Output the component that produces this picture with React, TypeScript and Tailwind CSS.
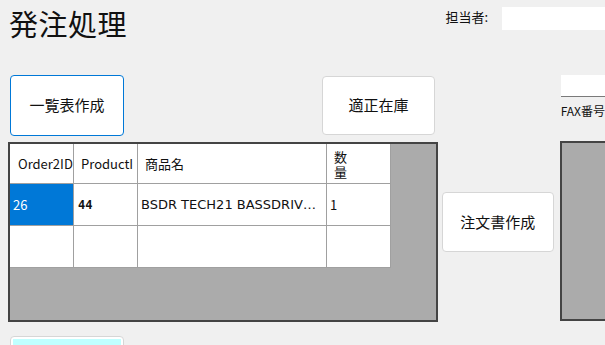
import React from "react";

const jp = '"Noto Sans CJK JP", "Noto Sans", sans-serif';

const rows = [
  { order: "26", product: "44", name: "BSDR TECH21 BASSDRIV…", qty: "1" },
  { order: "", product: "", name: "", qty: "" },
];

const cell = "border-r border-b border-[#a0a0a0] overflow-hidden whitespace-nowrap flex items-center";

const App = () => {
  return (
    <div className="w-[605px] h-[345px] bg-[#f0f0f0] overflow-hidden text-[#111]" style={{ fontFamily: jp }}>
      {/* header */}
      <div className="flex h-[74px]">
        <h1 className="pl-[9px] pt-[3px] text-[29px] leading-[40px] font-normal tracking-[0.5px]">発注処理</h1>
        <div className="ml-auto flex items-start pt-[7px]">
          <span className="text-[13px] leading-[18px] mt-[1px] mr-[14px]">担当者:</span>
          <div className="w-[103px] h-[23px] bg-white" />
        </div>
      </div>

      <div className="flex">
        {/* left column */}
        <div className="ml-[8px] w-[430px] flex flex-col">
          <div className="flex h-[68px]">
            <button className="ml-[2px] mt-[1px] w-[114px] h-[61px] bg-white border border-[#0078d7] rounded-[4px] text-[15px]">
              一覧表作成
            </button>
            <button className="ml-[198px] mt-[2px] w-[113px] h-[59px] bg-white border border-[#d6d6d6] rounded-[4px] text-[15px]">
              適正在庫
            </button>
          </div>

          <div className="h-[180px] bg-[#ababab] border-2 border-[#444]">
            <div className="grid grid-cols-[64px_64px_189px_64px] text-[13px]">
              <div className={`${cell} bg-white h-[40px] pl-[8px]`}>Order2ID</div>
              <div className={`${cell} bg-white h-[40px] pl-[7px]`}>ProductI</div>
              <div className={`${cell} bg-white h-[40px] pl-[7px]`}>商品名</div>
              <div className={`${cell} bg-white h-[40px] pl-[7px] flex-col items-start justify-center`}>
                <span className="block leading-[15px]">数</span>
                <span className="block leading-[15px]">量</span>
              </div>
              {rows.map((r, i) => (
                <React.Fragment key={i}>
                  <div className={`${cell} h-[42px] pl-[3px] ${i === 0 ? "bg-[#0078d7] text-white" : "bg-white"}`}>{r.order}</div>
                  <div className={`${cell} bg-white h-[42px] pl-[4px] font-bold text-[12px]`} style={{ fontFamily: '"DejaVu Sans Mono", monospace' }}>
                    {r.product}
                  </div>
                  <div className={`${cell} bg-white h-[42px] pl-[3px] pr-[3px]`}>
                    <span className="block text-[13px]" style={{ fontFamily: '"DejaVu Sans", sans-serif' }}>
                      {r.name}
                    </span>
                  </div>
                  <div className={`${cell} bg-white h-[42px] pl-[3px]`}>{r.qty}</div>
                </React.Fragment>
              ))}
            </div>
          </div>

          <button className="ml-[2px] mt-[14px] w-[114px] h-[40px] bg-white border border-[#d6d6d6] rounded-[4px] p-[2px]">
            <div className="w-full h-full bg-[#c0ffff]" />
          </button>
        </div>

        {/* middle column */}
        <div className="ml-[4px] pt-[118px]">
          <button className="w-[112px] h-[60px] bg-white border border-[#d6d6d6] rounded-[4px] text-[15px]">
            注文書作成
          </button>
        </div>

        {/* right column */}
        <div className="ml-[6px] flex-1 flex flex-col">
          <div className="ml-[1px] mt-[1px] h-[22px] bg-white border-b border-[#7a7a7a]" />
          <div className="ml-[1px] mt-[6px] text-[12px] leading-[16px] whitespace-nowrap">FAX番号</div>
          <div className="mt-[22px] h-[180px] bg-[#ababab] border-2 border-r-0 border-[#444]" />
        </div>
      </div>
    </div>
  );
};

export default App;
